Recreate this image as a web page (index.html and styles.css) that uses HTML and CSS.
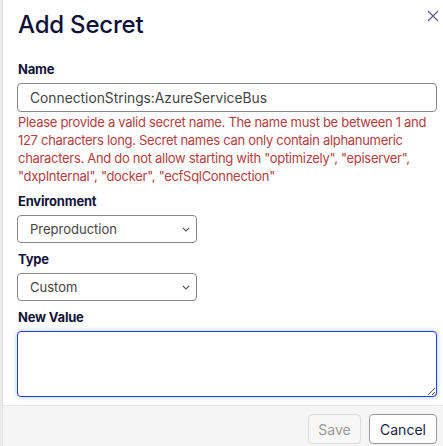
FILE: index.html
```html
<!DOCTYPE html>
<html lang="en">
<head>
  <meta charset="UTF-8">
  <title>Add Secret</title>
  <link rel="stylesheet" href="styles.css">
</head>
<body>
  <div class="page">
    <div class="backdrop"></div>

    <div class="modal">
      <div class="modal-body">
        <button class="close-btn" aria-label="Close">
          <svg width="12" height="12" viewBox="0 0 12 12">
            <path d="M1 1 L11 11 M11 1 L1 11" stroke="#5c5c7a" stroke-width="1.2" fill="none"/>
          </svg>
        </button>

        <h1>Add Secret</h1>

        <label class="field-label">Name</label>
        <input class="text-input" type="text" value="ConnectionStrings:AzureServiceBus">
        <p class="error">Please provide a valid secret name. The name must be between 1 and 127 characters long. Secret names can only contain alphanumeric characters. And do not allow starting with "optimizely", "episerver", "dxpInternal", "docker", "ecfSqlConnection"</p>

        <label class="field-label">Environment</label>
        <div class="select-wrap">
          <select class="select"><option>Preproduction</option></select>
          <svg class="chevron" width="8" height="5" viewBox="0 0 8 5">
            <path d="M0.8 0.8 L4 4 L7.2 0.8" stroke="#555" stroke-width="1.2" fill="none"/>
          </svg>
        </div>

        <label class="field-label">Type</label>
        <div class="select-wrap">
          <select class="select"><option>Custom</option></select>
          <svg class="chevron" width="8" height="5" viewBox="0 0 8 5">
            <path d="M0.8 0.8 L4 4 L7.2 0.8" stroke="#555" stroke-width="1.2" fill="none"/>
          </svg>
        </div>

        <label class="field-label">New Value</label>
        <textarea class="textarea"></textarea>
      </div>

      <div class="modal-footer">
        <button class="btn btn-disabled">Save</button>
        <button class="btn">Cancel</button>
      </div>
    </div>
  </div>
</body>
</html>
```

FILE: styles.css
```css
* { margin:0; padding:0; box-sizing:border-box; }
html, body { width:100%; height:100%; background:#fff; font-family:Inter, "Liberation Sans", sans-serif; overflow:hidden; }

.page {
  display:flex;
  height:100%;
}
.backdrop {
  width:3px;
  background:#ebebeb;
  border-right:1px solid #e2e2e2;
}
.modal {
  flex:1;
  display:flex;
  flex-direction:column;
}
.modal-body {
  position:relative;
  padding:10px 6px 8px 14px;
}
.close-btn {
  position:absolute;
  top:10px; right:4px;
  background:none;
  border:none;
  width:12px; height:12px;
  cursor:pointer;
}
.close-btn svg { display:block; }

h1 {
  font-size:24px;
  font-weight:500;
  line-height:30px;
  color:#0e0f3a;
  margin-left:1px;
  letter-spacing:-0.2px;
}

.field-label {
  display:block;
  font-size:13px;
  font-weight:700;
  line-height:18px;
  color:#13143a;
  margin:7px 0 5px 1px;
  letter-spacing:-0.2px;
}
h1 + .field-label { margin-top:20px; }

.text-input {
  display:block;
  width:100%;
  height:29px;
  border:1px solid #888;
  border-radius:4px;
  padding:0 12px;
  font-family:inherit;
  font-size:13.8px;
  color:#444;
  outline:none;
}
.error {
  margin-top:1px;
  margin-left:1px;
  font-size:13px;
  line-height:18px;
  letter-spacing:-0.3px;
  color:#b3403f;
}

.select-wrap {
  position:relative;
  width:180px;
}
.select {
  display:block;
  width:100%;
  height:28px;
  appearance:none;
  -webkit-appearance:none;
  background:#fff;
  border:1px solid #888;
  border-radius:4px;
  padding:0 12px;
  font-family:inherit;
  font-size:13px;
  color:#444;
  outline:none;
}
.chevron {
  position:absolute;
  right:7px; top:12px;
  pointer-events:none;
}

.textarea {
  display:block;
  width:100%;
  height:66px;
  border:1px solid #1e3fe6;
  border-radius:4px;
  box-shadow:0 0 3px 2px rgba(60,110,240,0.18);
  resize:vertical;
  font-family:inherit;
  font-size:13px;
  outline:none;
}

.modal-footer {
  flex:1;
  display:flex;
  justify-content:flex-end;
  align-items:flex-start;
  gap:8px;
  padding:8px 6px 0 0;
  background:#f5f5f5;
  border-top:1px solid #e8e8e8;
}
.btn {
  height:30px;
  width:68px;
  background:#fff;
  border:1px solid #9a9a9a;
  border-radius:4px;
  font-family:inherit;
  font-size:14px;
  color:#1b1c4a;
  cursor:pointer;
}
.btn-disabled {
  width:53px;
  background:#f7f7f7;
  border-color:#dcdcdc;
  color:#9a9a9a;
}
```
